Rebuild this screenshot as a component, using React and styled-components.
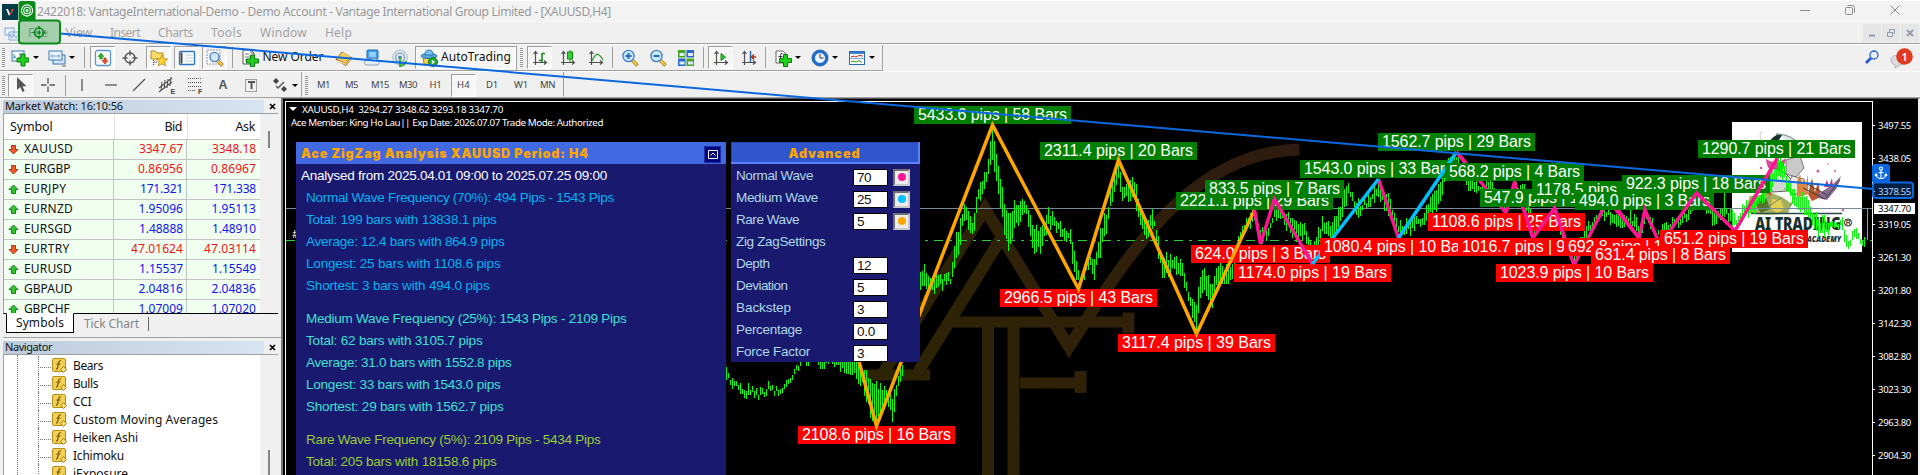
import React, { useLayoutEffect, useRef } from 'react';
import styled, { createGlobalStyle, css } from 'styled-components';

const UI = '"Noto Sans", "Open Sans", sans-serif';
const ARIAL = '"Liberation Sans", Arial, sans-serif';

const Global = createGlobalStyle`
  * { box-sizing: border-box; }
  body { margin: 0; overflow: hidden; background: #f0f0f0; }
`;

/* ---------- text fitted to a given width ---------- */
const FitSpan = styled.span`
  display: inline-block;
  flex: none;
  white-space: pre;
  font-family: ${(p) => p.$font || UI};
  font-size: ${(p) => p.$size || 12}px;
  font-weight: ${(p) => p.$weight || 400};
  color: ${(p) => p.$color || 'inherit'};
  line-height: 1.2;
`;
function Fit({ w, children, ...rest }) {
  const ref = useRef(null);
  useLayoutEffect(() => {
    const el = ref.current;
    el.style.letterSpacing = '0px';
    const natural = el.getBoundingClientRect().width;
    el.style.letterSpacing = `${(w - natural) / el.textContent.length}px`;
  }, [w, children]);
  return <FitSpan ref={ref} {...rest}>{children}</FitSpan>;
}

/* ---------- window frame ---------- */
const Window = styled.div`
  position: relative;
  width: 1920px;
  height: 475px;
  overflow: hidden;
  display: flex;
  flex-direction: column;
  background: #f0f0f0;
  border-top: 1px solid #fff;
`;
const TitleBar = styled.header`
  height: 22px;
  flex: none;
  display: flex;
  align-items: center;
  padding-left: 2px;
  background: #f3f3f3;
  color: #989898;
`;
const AppIcon = styled.svg`margin-right: 19px; flex: none;`;
const WindowButtons = styled.div`
  margin-left: auto;
  display: flex;
  gap: 33px;
  padding: 0 19px 4px 0;
`;
const MenuBar = styled.nav`
  height: 21px;
  flex: none;
  display: flex;
  align-items: center;
  padding-left: 4px;
  border-bottom: 1px solid #a0a0a0;
  color: #a2a2a2;
`;
const MenuItem = styled.div`
  margin-left: ${(p) => p.$ml}px;
  padding-bottom: 2px;
`;
const ChildButtons = styled.div`
  margin-left: auto;
  display: flex;
  gap: 1px;
  padding-right: 1px;
`;
const ChildButton = styled.div`
  width: 18px;
  height: 18px;
  background: #e6e6e6;
  display: grid;
  place-items: center;
`;
const ToolRow = styled.div`
  height: ${(p) => p.$h}px;
  flex: none;
  display: flex;
  justify-content: space-between;
  border-top: 1px solid #fff;
`;
const Bars = styled.div`display: flex;`;
const Toolbar = styled.div`
  display: flex;
  align-items: center;
  height: 100%;
  border-right: 1px solid #a0a0a0;
  border-bottom: 1px solid ${(p) => (p.$last ? 'transparent' : '#a0a0a0')};
  padding: ${(p) => (p.$last ? 2 : 0)}px ${(p) => p.$pr || 0}px 0 ${(p) => p.$pl || 2}px;
`;
const Grip = styled.div`
  width: 3px;
  height: 19px;
  background: repeating-linear-gradient(#9a9a9a 0 1px, #f0f0f0 1px 2px);
`;
const Slot = styled.div`
  margin-left: ${(p) => p.$ml || 0}px;
  width: ${(p) => p.$w || 24}px;
  height: 23px;
  flex: none;
  display: flex;
  align-items: center;
  justify-content: center;
  gap: 3px;
  color: #111;
  ${(p) => p.$on && css`
    background: repeating-conic-gradient(#fff 0 25%, #f0f0f0 0 50%) 0 0 / 2px 2px;
    border: 1px solid;
    border-color: #a0a0a0 #fff #fff #a0a0a0;
  `}
`;
const Sep = styled.div`
  margin-left: ${(p) => p.$ml || 0}px;
  width: 1px;
  height: 21px;
  background: #a0a0a0;
`;
const Caret = styled.div`
  margin-left: ${(p) => p.$ml || 0}px;
  border: 3px solid transparent;
  border-top-color: #000;
  border-bottom: 0;
`;
const RightTools = styled.div`
  display: flex;
  gap: 9px;
  padding: 3px 6px 0 0;
`;

/* ---------- body ---------- */
const Body = styled.div`
  flex: 1;
  min-height: 0;
  display: flex;
  border-top: 1px solid #a0a0a0;
`;
const Dock = styled.aside`
  width: 281px;
  flex: none;
  display: flex;
  flex-direction: column;
  padding-left: 3px;
`;
const DockTitle = styled.div`
  height: 14px;
  flex: none;
  margin-top: ${(p) => p.$mt || 1}px;
  display: flex;
  align-items: center;
  color: #111;
`;
const DockName = styled.div`
  width: 261px;
  height: 13px;
  display: flex;
  align-items: center;
  padding-left: 2px;
  background: linear-gradient(90deg, #bccbdc, #d7e4f2);
`;
const Close = styled.svg`margin-left: 5px;`;
const MarketBox = styled.div`
  height: 201px;
  flex: none;
  width: 275px;
  display: flex;
  border: 1px solid #a0a0a0;
  border-right: 0;
  border-bottom: 1px solid #000;
  overflow: hidden;
`;
const Quotes = styled.div`width: 256px; background: #fff;`;
const QuoteHead = styled.div`
  display: grid;
  grid-template-columns: 110px 73px 73px;
  height: 26px;
  border-bottom: 1px solid #c3c3c3;
  align-items: center;
  color: #111;
  & > * + * { border-left: 1px solid #e3e3e3; height: 100%; }
`;
const HeadCell = styled.div`
  display: flex;
  align-items: center;
  justify-content: ${(p) => (p.$right ? 'flex-end' : 'flex-start')};
  padding: 0 5px 0 6px;
`;
const QuoteRow = styled.div`
  display: grid;
  grid-template-columns: 109px 73px 74px;
  height: 20px;
  background: #f0fff0;
  border-bottom: 1px solid #c3c3c3;
`;
const SymbolCell = styled.div`
  display: flex;
  align-items: center;
  gap: 5px;
  padding-left: 4px;
  color: #111;
`;
const PriceCell = styled.div`
  display: flex;
  align-items: center;
  justify-content: flex-end;
  padding-right: ${(p) => p.$pr}px;
  border-left: 1px solid #c3c3c3;
  color: ${(p) => (p.$up ? '#1414f0' : '#f01414')};
`;
const Scroll = styled.div`
  width: 18px;
  flex: none;
  background: #f0f0f0;
  display: flex;
  justify-content: center;
  padding: ${(p) => p.$top}px 1px 0 0;
`;
const Thumb = styled.div`
  width: 2px;
  height: ${(p) => p.$h}px;
  background: #858585;
`;
const Tabs = styled.div`
  height: 24px;
  flex: none;
  width: 278px;
  display: flex;
  align-items: flex-start;
  padding-left: 3px;
  border-bottom: 1px solid #a0a0a0;
`;
const Tab = styled.div`
  width: 68px;
  height: 20px;
  margin-top: -1px;
  display: flex;
  justify-content: center;
  align-items: center;
  background: #fff;
  border: 1px solid #000;
  border-top: 1px solid #fff;
  color: #111;
`;
const IdleTab = styled.div`
  margin: 3px 0 0 10px;
  height: 14px;
  display: flex;
  align-items: center;
  color: #858585;
  padding-right: 9px;
  border-right: 1px solid #666;
`;
const NavBox = styled.div`
  flex: 1;
  min-height: 0;
  width: 275px;
  display: flex;
  border: 1px solid #a0a0a0;
  border-width: 1px 0 0 1px;
  background: #fff;
  overflow: hidden;
`;
const Tree = styled.div`
  flex: 1;
  margin-left: 13px;
  padding-top: 1px;
  border-left: 1px dotted #777;
  overflow: hidden;
`;
const TreeItem = styled.div`
  margin-left: 20px;
  height: 18px;
  display: flex;
  align-items: center;
  border-left: 1px dotted #777;
  color: #111;
`;
const Twig = styled.div`
  width: 11px;
  border-top: 1px dotted #777;
  margin: 4px 1px 0 1px;
`;
const TreeLabel = styled.div`margin-left: 6px;`;

/* ---------- chart ---------- */
const ChartFrame = styled.main`
  flex: 1;
  min-width: 0;
  display: flex;
  background: #000;
  border-left: 2px solid #777;
  border-right: 2px solid #f0f0f0;
  border-top: 1px solid #555;
  padding: 2px 0 0 2px;
`;
const Plot = styled.section`
  position: relative;
  width: 1588px;
  flex: none;
  border: 1px solid #fff;
  border-bottom: 0;
  overflow: hidden;
`;
/* the drawing and the tags share window coordinates */
const Canvas = styled.svg`
  position: absolute;
  left: -286px;
  top: -102px;
`;
const Tag = styled.div`
  position: absolute;
  left: ${(p) => p.$x - 286}px;
  top: ${(p) => p.$y - 102}px;
  width: ${(p) => p.$w}px;
  height: 18px;
  padding-left: 4px;
  display: flex;
  align-items: center;
  background: ${(p) => (p.$red ? '#ff0000' : '#008000')};
  color: #fff;
`;
const Axis = styled.div`
  flex: 1;
  padding-top: 8px;
  color: #fff;
`;
const Tick = styled.div`
  height: 33px;
  display: flex;
  align-items: center;
  gap: 3px;
  &::before { content: ''; width: 2px; height: 1px; background: #fff; }
`;
const InfoLine = styled.div`
  position: absolute;
  left: ${(p) => p.$x - 286}px;
  top: ${(p) => p.$y - 102}px;
  display: flex;
  align-items: center;
  gap: 5px;
  color: #fff;
`;
const Down = styled.i`
  border: 4px solid transparent;
  border-top-color: #fff;
  border-bottom: 0;
`;
const Panel = styled.div`
  position: absolute;
  left: ${(p) => p.$x - 286}px;
  top: 40px;
  width: ${(p) => p.$w}px;
  height: ${(p) => p.$h}px;
  background: #191970;
`;
const PanelTitle = styled.div`
  height: 22px;
  display: flex;
  align-items: center;
  padding: 0 5px;
  justify-content: ${(p) => (p.$center ? 'center' : 'space-between')};
  background: ${(p) => (p.$center ? '#2f56cd' : '#4169e1')};
  ${(p) => p.$center && css`
    padding-top: 3px;
    border: solid #5a82ff; border-width: 0 2px 2px 0;
    box-shadow: inset 1px 1px #2444b8;
  `}
`;
const Fold = styled.div`
  width: 17px;
  height: 17px;
  margin-top: 3px;
  background: #000080;
  border: 1px solid #1b2fa0;
  display: grid;
  place-items: center;
`;
const Report = styled.div`
  display: flex;
  flex-direction: column;
  gap: 11px;
  padding-left: 10px;
`;
const Group = styled.div`color: ${(p) => p.$color};`;
const Line = styled.div`
  height: 22px;
  display: flex;
  align-items: center;
  padding-top: 2px;
  margin-left: ${(p) => p.$ml || 0}px;
`;
const Setting = styled.div`
  height: 22px;
  display: flex;
  align-items: center;
  padding-left: 5px;
  color: #add8e6;
`;
const SettingName = styled.div`
  width: 117px;
  display: flex;
  padding-top: 2px;
`;
const Field = styled.div`
  width: 35px;
  height: 17px;
  margin-top: 5px;
  padding: 1px 0 0 3px;
  display: flex;
  align-items: center;
  background: #fff;
  border: 1px solid #000;
  color: #111;
`;
const Swatch = styled.div`
  width: 17px;
  height: 17px;
  margin: 4px 0 0 5px;
  display: grid;
  place-items: center;
  background: #ececec;
  border: 2px solid;
  border-color: #6f6f6f #c8c8c8 #c8c8c8 #6f6f6f;
  &::after { content: ''; width: 8px; height: 8px; border-radius: 50%; background: ${(p) => p.$color}; }
`;
const PriceNow = styled.div`
  position: absolute;
  left: 1874px;
  top: 202px;
  width: 41px;
  height: 11px;
  padding-left: 4px;
  display: flex;
  align-items: center;
  background: #fff;
  color: #000;
`;

/* ---------- overlay marks ---------- */
const Overlay = styled.svg`
  position: absolute;
  left: 0;
  top: -1px;
  pointer-events: none;
`;

/* ---------- icons ---------- */
const Svg = ({ w = 18, h = 18, children }) => (
  <svg width={w} height={h} viewBox={`0 0 ${w} ${h}`} fill="none">{children}</svg>
);
const Plus = ({ x, y }) => (
  <path transform={`translate(${x} ${y})`} d="M4 0h4v4h4v4H8v4H4V8H0V4h4z" fill="#1fd01f" stroke="#0a7a0a" />
);
const Axes = () => (
  <g stroke="#505050" strokeWidth="1.2">
    <path d="M4.5 3v13M2 13.5h13M2.5 5l2-2.5 2 2.5M13 11.5l2.5 2-2.5 2" />
  </g>
);
const NewChart = () => (
  <Svg><rect x="1" y="2" width="12" height="10" fill="#fff" stroke="#3b79b5" /><path d="M3 5v5M3 8h2M9 4v5" stroke="#3b79b5" /><Plus x={6} y={5} /></Svg>
);
const Profiles = () => (
  <Svg><rect x="5" y="6" width="12" height="9" fill="#cfe4f7" stroke="#3b79b5" /><rect x="1" y="2" width="13" height="9" fill="#eaf4fd" stroke="#3b79b5" /><path d="M3 7h9M4 5v4M11 5v4" stroke="#7da7cd" /><path d="M14 17h4" stroke="#666" /></Svg>
);
const Watch = () => (
  <Svg><rect x="1.5" y="1.5" width="15" height="15" rx="2" fill="#fff" stroke="#5a96cc" strokeWidth="1.3" /><path d="M4 7.500L7 4l3 3.500H8.200V10H5.800V7.500z" fill="#2bb52b" stroke="#178017" strokeWidth=".6" /><path d="M8 11.500l3 3.500 3-3.500h-1.800V9H9.800v2.500z" fill="#f05020" stroke="#a83010" strokeWidth=".6" /></Svg>
);
const Cross = () => (
  <Svg><g stroke="#555" strokeWidth="1.4"><circle cx="9" cy="9" r="5" /><path d="M9 1.500v5M9 11.500v5M1.500 9h5M11.500 9h5" /></g></Svg>
);
const Star = () => (
  <Svg><path d="M1 2h4l2 2h6v6H1z" fill="#f6dc6a" stroke="#b08d1c" /><path d="M3.500 11v6M4 13h4" stroke="#444" strokeDasharray="1 1" /><path d="M12 6l1.700 3.600 4 .5-3 2.700.8 4L12 14.800 8.500 16.800l.8-4-3-2.700 4-.5z" fill="#ffd23a" stroke="#b9860b" strokeWidth=".8" /></Svg>
);
const Terminal = () => (
  <Svg><rect x="1.500" y="2.500" width="15" height="13" rx="1" fill="#fff" stroke="#2f78bd" strokeWidth="1.4" /><rect x="2.500" y="3.500" width="2" height="11" fill="#444" /><path d="M7 6h8M7 9h8M7 12h8" stroke="#bcd" /></Svg>
);
const Lens = ({ sign, doc }) => (
  <Svg>
    {doc && <path d="M1 1h13v14H1z" fill="#fff" stroke="#88a" strokeDasharray="2 1" />}
    <path d="M11.500 11.500l5 5" stroke="#a97b10" strokeWidth="3.500" /><path d="M11.500 11.500l4.500 4.500" stroke="#f2cf4a" strokeWidth="2" />
    <circle cx={doc ? 8.5 : 7.5} cy={doc ? 8 : 7} r={doc ? 4.6 : 5.6} fill={doc ? '#cde4f4' : '#c6eafb'} stroke="#4a80c0" strokeWidth="1.400" />
    {sign && <path d={sign === '+' ? 'M4.500 7h6M7.500 4v6' : 'M4.500 7h6'} stroke="#2a68b8" strokeWidth="2" />}
  </Svg>
);
const Lens2 = () => <Lens doc />;
const ZoomIn = () => <Lens sign="+" />;
const ZoomOut = () => <Lens sign="-" />;
const Order = () => (
  <Svg><path d="M2 1h8l3 3v11H2z" fill="#fff" stroke="#555" /><path d="M10 1v3h3M4 5h4M4 8h6M4 11h4" stroke="#777" /><Plus x={5.500} y={6} /></Svg>
);
const Book = () => (
  <Svg><path d="M1 10.500L7 3l10 6-6 7.500z" fill="#c98a18" stroke="#7d5208" /><path d="M1.500 9.500l6-6.500 8.500 5-5.500 6z" fill="#f3c95c" /><path d="M2 11.500l9 4 5.500-6" stroke="#fff4d0" /></Svg>
);
const Server = () => (
  <Svg><rect x="4" y="1" width="11" height="9" rx="1" fill="#3f9be8" stroke="#1f6fb8" /><path d="M6 3h7v5H6z" fill="#8fd0ff" /><path d="M2 12q2-3 6-2 4-2 7 1 3 4-1 5H3q-3-1-1-4z" fill="#e6eef7" stroke="#8aa3c0" /></Svg>
);
const Signal = () => (
  <Svg><circle cx="9" cy="8.500" r="7.200" stroke="#b8c8d6" strokeWidth="1.500" /><circle cx="9" cy="8.500" r="4.500" stroke="#7fa8c8" strokeWidth="1.500" /><circle cx="9" cy="8.500" r="2" fill="#4a88b8" /><path d="M9 9v8q5-.5 6-5" stroke="#37b037" strokeWidth="2" /></Svg>
);
const Robot = () => (
  <Svg><path d="M3 8q6 3 12 0l-1 7q-5 3-10 0z" fill="#f2cf4a" stroke="#ad8414" /><ellipse cx="9" cy="7" rx="8" ry="2.500" fill="#5aa9e0" stroke="#2a74b0" /><path d="M5 6q0-5 4-5t4 5z" fill="#7cc2f0" stroke="#2a74b0" /><circle cx="13" cy="13" r="4.500" fill="#1faa30" stroke="#0c7a1c" /><path d="M11.800 10.800v4.400l3.600-2.200z" fill="#fff" /></Svg>
);
const BarsI = () => <Svg><Axes /><path d="M11 4v9M11 4.500h3M8 11.500h3" stroke="#108a10" strokeWidth="1.500" /></Svg>;
const Candle = () => <Svg><Axes /><path d="M11 1v13" stroke="#108a10" /><rect x="8.500" y="3" width="5" height="7" fill="#35d035" stroke="#108a10" /></Svg>;
const Curve = () => <Svg><Axes /><path d="M5 12q4-9 7-6 2 1 4 5" stroke="#3a9a3a" strokeWidth="1.300" /></Svg>;
const Tiles = () => (
  <Svg><rect x="1" y="1" width="7.500" height="7.500" fill="#45a51c" /><rect x="9.500" y="1" width="7.500" height="7.500" fill="#2a66d0" /><rect x="1" y="9.500" width="7.500" height="7.500" fill="#2a66d0" /><rect x="9.500" y="9.500" width="7.500" height="7.500" fill="#45a51c" /><path d="M2.500 4h5v3h-5zM11 4h5v3h-5zM2.500 12.500h5v3h-5zM11 12.500h5v3h-5z" fill="#dcecf8" /></Svg>
);
const Auto = () => <Svg><Axes /><path d="M9 4.500v7l4.500-3.500z" fill="#30c030" stroke="#108a10" /></Svg>;
const Shift = () => <Svg><Axes /><path d="M10.500 2v11" stroke="#2066a8" strokeWidth="1.500" /><path d="M16 8h-4M14 5.500L11.500 8l2.500 2.500" stroke="#b03010" strokeWidth="1.500" /></Svg>;
const Indi = () => <Svg><path d="M2 2h7l3 3v9H2z" fill="#fff" stroke="#666" /><path d="M8.500 4.500q-2-1-2 2V11M4.500 7.500h4" stroke="#333" /><Plus x={5.500} y={5.500} /></Svg>;
const Clock = () => <Svg><circle cx="9" cy="9" r="6.600" fill="#eef6fd" stroke="#1e6fd0" strokeWidth="3" /><circle cx="9" cy="9" r="8.100" stroke="#0f4e9a" strokeWidth=".6" /><path d="M9 5v4h3.500" stroke="#333" /></Svg>;
const Template = () => <Svg><rect x="1.500" y="2.500" width="15" height="13" fill="#fff" stroke="#2a68b0" /><path d="M2 3h14v2H2z" fill="#3b82d0" /><path d="M3 8l3-1 2 1 3-1.500 4 .5" stroke="#b03018" /><path d="M2 9.500h14" stroke="#2a68b0" strokeWidth=".6" /><path d="M3 13l3-1 2 1 3-1.500 3 2" stroke="#2a9a2a" /></Svg>;
const Cursor = () => <Svg><path d="M5 1v13l3.300-3 2.200 5 2.200-1-2.200-4.800h4z" fill="#555" /></Svg>;
const G = (d) => () => <Svg><path d={d} stroke="#555" strokeWidth="1.300" /></Svg>;
const Thin = G('M9 2v5.500M9 10.500V16M2 9h5.500M10.500 9H16');
const VLine = G('M9 3v12');
const HLine = G('M3 9h12');
const Trend = G('M3 15L15 3');
const Small = styled.text`
  font: 700 7px ${ARIAL};
  fill: #444;
`;
const Equi = () => <Svg><path d="M1 12L14 2M1 16L14 6M4 6l-1 9M7 4l-1 9M10 3l-1 9M13 1l-1 9" stroke="#555" strokeWidth="1.100" /><Small x="12.500" y="17.500">E</Small></Svg>;
const Fibo = () => <Svg><path d="M2 2.500h13M2 6.500h13M2 10.500h13M2 14.500h8" stroke="#555" strokeDasharray="1 1" /><Small x="12" y="17.500">F</Small></Svg>;
const TBox = () => <Svg><rect x="3.500" y="3.500" width="11" height="12" stroke="#555" strokeDasharray="1 1" /><path d="M6 6h7M9.500 6v7" stroke="#555" strokeWidth="2" /></Svg>;
const Shapes = () => <Svg><path d="M5 2l3 3-3 3-3-3z" fill="#444" /><path d="M5 10l2 2 6-6" fill="none" stroke="#555" strokeWidth="1.400" /><path d="M13 10l3 3-3 3-3-3z" fill="#444" /></Svg>;

const Arrow = ({ up }) => (
  <svg width="11" height="11" viewBox="0 0 11 11">
    <path
      transform={up ? '' : 'rotate(180 5.500 5.500)'}
      d="M5.500 1l4.500 4.500H7.500V9.500h-4V5.500H1z"
      fill={up ? '#33c433' : '#f25a2a'} stroke={up ? '#187018' : '#9a2c0c'} strokeWidth=".9"
    />
  </svg>
);
const FxIcon = () => (
  <svg width="15" height="15" viewBox="0 0 15 15">
    <rect x=".5" y=".5" width="13" height="13" rx="1.500" fill="#f3cf52" stroke="#b98d1a" />
    <path d="M9 3q-2-.8-2.500 2L5.500 10q-.3 1.200-1.500 1M4.500 6h4" fill="none" stroke="#6d5208" strokeWidth="1.200" />
    <path d="M11.500 8.500l3 3-3 3-3-3z" fill="#f8dc6c" stroke="#a67c12" />
  </svg>
);

/* ---------- data ---------- */
const QUOTES = [
  ['XAUUSD', '3347.67', '3348.18', 0, 49, 44], ['EURGBP', '0.86956', '0.86967', 0, 46.500, 45],
  ['EURJPY', '171.321', '171.338', 1, 42.500, 43], ['EURNZD', '1.95096', '1.95113', 1, 49, 44.500],
  ['EURSGD', '1.48888', '1.48910', 1, 48, 44], ['EURTRY', '47.01624', '47.03114', 0, 45.500, 52],
  ['EURUSD', '1.15537', '1.15549', 1, 48, 44], ['GBPAUD', '2.04816', '2.04836', 1, 48.500, 44.500],
  ['GBPCHF', '1.07009', '1.07020', 1, 45.500, 44.500],
];
const NAV = [['Bears', 30], ['Bulls', 25], ['CCI', 18.500], ['Custom Moving Averages', 145], ['Heiken Ashi', 65], ['Ichimoku', 51], ['iExposure', 55]];
const REPORT = [
  ['#00b4f0', [['Normal Wave Frequency (70%): 494 Pips - 1543 Pips', 308], ['Total: 199 bars with 13838.1 pips', 190.500], ['Average: 12.4 bars with 864.9 pips', 198.500], ['Longest: 25 bars with 1108.6 pips', 194.500], ['Shortest: 3 bars with 494.0 pips', 183.500]]],
  ['#40e0d0', [['Medium Wave Frequency (25%): 1543 Pips - 2109 Pips', 320.500], ['Total: 62 bars with 3105.7 pips', 176.500], ['Average: 31.0 bars with 1552.8 pips', 205.500], ['Longest: 33 bars with 1543.0 pips', 194.500], ['Shortest: 29 bars with 1562.7 pips', 197.500]]],
  ['#9acd32', [['Rare Wave Frequency (5%): 2109 Pips - 5434 Pips', 294.500], ['Total: 205 bars with 18158.6 pips', 190.500]]],
];
const SETTINGS = [
  ['Normal Wave', 77, '70', '#ff1493'], ['Medium Wave', 82, '25', '#00bfff'], ['Rare Wave', 63, '5', '#ffa500'],
  ['Zig ZagSettings', 89.500], ['Depth', 33.500, '12'], ['Deviation', 51.500, '5'], ['Backstep', 55, '3'],
  ['Percentage', 66, '0.0'], ['Force Factor', 74, '3'],
];
const LOW_TAGS = [
  [914, 106, '5433.6 pips | 58 Bars'], [1040, 142, '2311.4 pips | 20 Bars'], [1000, 289, '2966.5 pips | 43 Bars', 1],
  [798, 426, '2108.6 pips | 16 Bars', 1], [1118, 334, '3117.4 pips | 39 Bars', 1], [1176, 192, '2221.1 pips | 29 Bars'],
  [1205, 180, '833.5 pips | 7 Bars'], [1191, 245, '624.0 pips | 3 Bars', 1], [1234, 264, '1174.0 pips | 19 Bars', 1],
  [1300, 160, '1543.0 pips | 33 Bars'], [1378, 133, '1562.7 pips | 29 Bars'], [1428, 213, '1108.6 pips | 25 Bars', 1],
  [1480, 189, '547.9 pips | 12 Bars'], [1532, 181, '1178.5 pips | 17 Bars'], [1622, 175, '922.3 pips | 18 Bars'],
  [1575, 192, '494.0 pips | 3 Bars'], [1496, 264, '1023.9 pips | 10 Bars', 1],
];
const TOP_TAGS = [
  [1320, 238, '1080.4 pips | 10 Bars', 1], [1445, 163, '568.2 pips | 4 Bars'], [1458, 238, '1016.7 pips | 9 Bars', 1],
  [1564, 238, '692.8 pips | 12 Bars', 1], [1591, 246, '631.4 pips | 8 Bars', 1], [1660, 230, '651.2 pips | 19 Bars', 1],
  [1698, 140, '1290.7 pips | 21 Bars'],
];
const PRICES = ['3497.55', '3438.05', '3378.55', '3319.05', '3261.30', '3201.80', '3142.30', '3082.80', '3023.30', '2963.80', '2904.30'];

/* price range along the chart: x, high, low */
const RANGE = [
  726, 370, 378, 732, 378, 388, 735, 376, 382, 743, 386, 401, 752, 383, 393, 758, 390, 401, 768, 383, 393, 782, 387, 394, 790, 372, 384, 798, 360, 366, 805, 350, 364,
  850, 345, 372, 863, 372, 390, 869, 372, 415, 876, 382, 423, 886, 386, 405, 892, 392, 419, 902, 360, 374, 912, 300, 330, 920, 272, 295, 923, 265, 285, 937, 278, 294, 950, 272, 281,
  955, 238, 268, 964, 205, 222, 973, 218, 242, 978, 188, 205, 987, 162, 178, 992, 127, 162, 998, 162, 192, 1007, 215, 252, 1013, 202, 235, 1025, 195, 212, 1032, 222, 253,
  1042, 228, 252, 1047, 207, 228, 1058, 218, 235, 1070, 232, 245, 1073, 248, 275, 1080, 272, 288, 1090, 252, 268, 1094, 255, 278, 1101, 225, 252, 1107, 205, 228, 1113, 175, 198,
  1118, 163, 185, 1122, 185, 200, 1133, 172, 198, 1140, 205, 228, 1145, 228, 245, 1153, 210, 225, 1162, 255, 283, 1172, 255, 272, 1182, 258, 275, 1188, 288, 305, 1196, 300, 331,
  1203, 262, 285, 1211, 285, 312, 1217, 262, 285, 1232, 265, 285, 1238, 235, 248, 1247, 218, 230, 1254, 212, 225, 1260, 225, 243, 1267, 225, 240, 1275, 202, 218, 1282, 208, 222,
  1292, 215, 238, 1305, 222, 242, 1313, 245, 262, 1322, 218, 235, 1330, 225, 241, 1342, 195, 218, 1348, 185, 198, 1357, 202, 217, 1367, 195, 210, 1378, 182, 200, 1387, 192, 212,
  1398, 222, 238, 1410, 218, 235, 1422, 212, 225, 1437, 188, 212, 1447, 155, 175, 1456, 153, 165, 1467, 175, 190, 1480, 180, 197, 1490, 182, 192, 1507, 203, 212, 1515, 184, 194,
  1523, 183, 200, 1533, 223, 238, 1554, 210, 222, 1567, 240, 257, 1575, 250, 263, 1587, 225, 240, 1597, 208, 222, 1613, 208, 222, 1617, 212, 230, 1630, 212, 228, 1640, 225, 238,
  1645, 210, 222, 1657, 228, 240, 1670, 218, 230, 1682, 213, 228, 1690, 202, 215, 1697, 195, 205, 1707, 203, 215, 1713, 210, 225, 1724, 203, 217, 1735, 215, 230, 1747, 202, 216,
  1757, 195, 210, 1767, 178, 195, 1778, 160, 178, 1783, 162, 182, 1793, 188, 205, 1807, 198, 215, 1813, 212, 235, 1820, 218, 238, 1833, 216, 228, 1842, 218, 232, 1847, 238, 253,
  1853, 228, 240, 1865, 238, 246,
];
function barsPath() {
  let d = '';
  let seed = 7;
  const rnd = () => { seed = (seed * 16807) % 2147483647; return seed / 2147483647; };
  for (let i = 0; i + 5 < RANGE.length; i += 3) {
    const [x0, h0, l0, x1, h1, l1] = RANGE.slice(i, i + 6);
    for (let x = x0 + (x0 % 2); x < x1; x += 2) {
      const t = (x - x0) / (x1 - x0);
      const hi = Math.round(h0 + (h1 - h0) * t + rnd() * 10 - 3);
      const lo = Math.round(l0 + (l1 - l0) * t + rnd() * 10 - 7);
      d += `M${x + 0.5} ${hi}V${Math.max(lo, hi + 5)}`;
    }
  }
  return d + 'M1867.500 208V240M1724.500 192V215';
}
const BARS = barsPath();

const Tags = ({ list }) => list.map(([x, y, text, red]) => {
  const w = text.length === 21 ? 157 : text.length === 20 ? 148 : 139;
  return <Tag key={text} $x={x} $y={y} $w={w} $red={red}><Fit w={w - 8} $font={ARIAL} $size={16}>{text}</Fit></Tag>;
});

const Brand = styled.text`
  font: 900 17px "Noto Sans", ${ARIAL};
  fill: #17302f;
`;
const BrandSub = styled.text`
  font: italic 800 8px "Open Sans", ${ARIAL};
  fill: #17302f;
`;

function Logo() {
  return (
    <g>
      <rect x="1732" y="122" width="130" height="130" fill="#fff" />
      <path d="M1762 131q-4 5 0 10" stroke="#ccc" fill="none" />
      <path d="M1769 142q6-9 14-8l-7 10z" fill="#173330" />
      <path d="M1776 134q14 0 23 10" fill="none" stroke="#8c9a99" strokeWidth="1.500" />
      <path d="M1783 136q10 1 15 9l-14 1z" fill="#e2e6e4" />
      <path d="M1766 159q10 7 20-1l-3 12-9 4q-8-6-8-15z" fill="#d34c9b" />
      <path d="M1786 160l14-4 4 12-8 9-10-3z" fill="#c9c9c9" stroke="#777" />
      <path d="M1773 168l12 5 8 8-6 10-14 1-6-8z" fill="#d4d6d3" stroke="#5a625d" />
      <path d="M1792 176l12 3 1 12-11 4-7-8z" fill="#eceae6" stroke="#777" />
      <path d="M1750 196q-6 14 0 17 18 3 38 0l4-9-10-7-8-3-6-4-8 5z" fill="#a3af62" />
      <path d="M1755 204l7-9 5 5 3 9-9 4z" fill="#54742a" />
      <path d="M1772 199l9 1 3 9-7 4-6-4z" fill="#e3d050" />
      <path d="M1762 179l4-4v18l-4 3zM1768 182l4 2-1 12-4-2z" fill="#c1682c" />
      <path d="M1797 181l3-7 2 9 2-4 2 5 2-10v20l-11 4z" fill="#dd8440" />
      <path d="M1808 194l4-16 3 14 3-10 3 15-9 4z" fill="#b8562c" />
      <path d="M1818 194l14-9 9-9-4 12-10 12-9-2z" fill="#8d6a92" />
      <path d="M1803 188l22 11M1807 184l20 11M1826 198l14-18" stroke="#39423f" fill="none" />
      <path d="M1784 188l12 9M1756 205l14-8M1765 209l16-11M1790 207l6-14" stroke="#66706b" fill="none" strokeWidth=".8" />
      <path d="M1824 187l3-7 2 6 3-8 1 9z" fill="#bd3b86" />
      <g fill="#d8569c"><circle cx="1761" cy="168" r="1.300" /><circle cx="1818" cy="171" r="1.500" /><circle cx="1835" cy="171" r="1" /><circle cx="1843" cy="210" r="1.200" /><circle cx="1828" cy="164" r=".8" /></g>
      <path d="M1751 213.500h91" stroke="#2a4a48" strokeWidth="1.300" />
      <Brand x="1755" y="230" textLength="86" lengthAdjust="spacingAndGlyphs">AI TRADING</Brand>
      <circle cx="1848" cy="222.500" r="3.600" fill="none" stroke="#222" /><Small x="1845.800" y="225">R</Small>
      <path d="M1756 240h20" stroke="#17302f" />
      <BrandSub x="1807" y="242" textLength="34" lengthAdjust="spacingAndGlyphs">ACADEMY</BrandSub>
    </g>
  );
}

function Chart() {
  return (
    <ChartFrame>
      <Plot>
        <Canvas width="1920" height="480" viewBox="0 0 1920 480" fill="none">
          <defs>
            <linearGradient id="mark" gradientUnits="userSpaceOnUse" x1="860" y1="380" x2="1300" y2="150">
              <stop offset="0" stopColor="#2c2404" /><stop offset=".5" stopColor="#302109" /><stop offset="1" stopColor="#2e1a10" />
            </linearGradient>
          </defs>
          <g stroke="url(#mark)" strokeWidth="12">
            <path d="M882 375L985 209L1069 347L1101 297C1140 240 1200 152 1299.500 149.500" />
            <path d="M918 372L1000 240" />
            <path d="M858.500 375h71.500M952 322h176M1020 383h55" strokeWidth="11" />
            <path d="M1128.500 312.500v21M988 327v160M1013.500 327v160M1080.500 371v22" />
          </g>
          <path d="M286 208.500h1586" stroke="#778899" />
          <path d="M286 240.500h1586" stroke="#32cd32" strokeDasharray="9 6 3 6" />
          <Logo />
          <path d={BARS} stroke="#00ff00" />
          <path d="M1732 208.500h130" stroke="#778899" />
          <path d="M1456.500 152L1506 213L1514.500 182L1533 238M1554.500 208L1574 265L1608 200L1639 238" strokeWidth="3.500" stroke="#ff1493" />
        </Canvas>
        <Tags list={LOW_TAGS} />
        <Canvas width="1920" height="480" viewBox="0 0 1920 480" fill="none" strokeWidth="3.500">
          <path d="M845 310L876.500 426L992.500 125L1078.500 289L1118.500 160L1196.500 334L1254.500 210" stroke="#ffa500" />
          <path d="M1254.500 210L1260.500 244L1274.500 199L1312.500 264M1378.500 179L1398.500 238M1456.500 152L1466 163M1523.500 208L1533 238L1554.500 208L1567 245M1618 210L1639 238L1645 210L1660 245L1696.500 193L1735 231L1777.500 158" stroke="#ff1493" />
          <path d="M1312.500 264L1378.500 179M1398.500 238L1456.500 152" stroke="#00bfff" />
        </Canvas>
        <Tags list={TOP_TAGS} />
        <InfoLine $x={289} $y={103.5}><Down /><Fit w={201} $size={9.8}>{'XAUUSD,H4  3294.27 3348.62 3293.18 3347.70'}</Fit></InfoLine>
        <InfoLine $x={291} $y={116.5}><Fit w={312} $size={9.8}>Ace Member: King Ho Lau|| Exp Date: 2026.07.07 Trade Mode: Authorized</Fit></InfoLine>
        <InfoLine $x={292} $y={228}><Fit w={6} $size={10}>#</Fit></InfoLine>
        <Panel $x={296} $w={430} $h={340}>
          <PanelTitle>
            <Fit w={288} $font={'Inter, "Open Sans", sans-serif'} $weight={900} $size={12.5} $color="#ffa500">Ace ZigZag Analysis XAUUSD Period: H4</Fit>
            <Fold><svg width="10" height="9" viewBox="0 0 10 9" fill="none" stroke="#fff"><path d="M.5.5h9v8h-9zM2.500 5.500L5 3l2.500 2.500" /></svg></Fold>
          </PanelTitle>
          <Line $ml={5}><Fit w={306} $font={ARIAL} $size={13.500} $color="#fff">Analysed from 2025.04.01 09:00 to 2025.07.25 09:00</Fit></Line>
          <Report>
            {REPORT.map(([color, lines]) => (
              <Group key={color} $color={color}>
                {lines.map(([t, w]) => <Line key={t}><Fit w={w} $font={ARIAL} $size={13.500}>{t}</Fit></Line>)}
              </Group>
            ))}
          </Report>
        </Panel>
        <Panel $x={731} $w={189} $h={220}>
          <PanelTitle $center><Fit w={72} $font={'Inter, "Open Sans", sans-serif'} $weight={900} $size={12.5} $color="#ffa500">Advanced</Fit></PanelTitle>
          {SETTINGS.map(([name, w, val, color]) => (
            <Setting key={name}>
              <SettingName><Fit w={w} $font={ARIAL} $size={13.500}>{name}</Fit></SettingName>
              {val && <Field><Fit w={val.length === 3 ? 18 : val.length * 7} $font={ARIAL} $size={13.500}>{val}</Fit></Field>}
              {color && <Swatch $color={color} />}
            </Setting>
          ))}
        </Panel>
      </Plot>
      <Axis>
        {PRICES.map((p) => <Tick key={p}><Fit w={33} $size={9.500}>{p}</Fit></Tick>)}
      </Axis>
    </ChartFrame>
  );
}

const B = ({ i: I, ml, w, on }) => <Slot $ml={ml} $w={w} $on={on}><I /></Slot>;
const FRAMES = [['M1', 324, 13], ['M5', 352, 13], ['M15', 380.500, 18], ['M30', 408.500, 18], ['H1', 436, 12], ['H4', 464, 13], ['D1', 492.500, 12], ['W1', 521.500, 14], ['MN', 548, 15]];

export default function App() {
  return (
    <Window>
      <Global />
      <TitleBar>
        <AppIcon width="16" height="16" viewBox="0 0 16 16"><rect width="16" height="16" fill="#073a47" /><path d="M4 5h2l2 5-1 2z" fill="#fff" /><path d="M8 10l2-5h2l-3.500 6z" fill="#e8502c" /></AppIcon>
        <Fit w={574} $size={12}>2422018: VantageInternational-Demo - Demo Account - Vantage International Group Limited - [XAUUSD,H4]</Fit>
        <WindowButtons>
          <svg width="12" height="12"><path d="M1 6.500h10" stroke="#8c8c8c" /></svg>
          <svg width="12" height="12" fill="none" stroke="#8c8c8c"><rect x="1.500" y="3.500" width="7" height="7" rx="1" /><path d="M3.500 1.500h5q2 0 2 2v5" /></svg>
          <svg width="12" height="12"><path d="M1.500 1.500l9 9M10.500 1.500l-9 9" stroke="#8c8c8c" /></svg>
        </WindowButtons>
      </TitleBar>
      <MenuBar>
        <Svg w={16} h={15}><path d="M1 2h9v7H1zM5 6h10v8H5z" fill="#eaf2fc" stroke="#7ea6dc" /><path d="M6 9l2 3 2-3 2 3 2-3" stroke="#7ea6dc" /></Svg>
        <MenuItem $ml={8}><Fit w={20}>File</Fit></MenuItem>
        <MenuItem $ml={17.500}><Fit w={27}>View</Fit></MenuItem>
        <MenuItem $ml={17.500}><Fit w={30}>Insert</Fit></MenuItem>
        <MenuItem $ml={18}><Fit w={35}>Charts</Fit></MenuItem>
        <MenuItem $ml={18}><Fit w={31}>Tools</Fit></MenuItem>
        <MenuItem $ml={18}><Fit w={47}>Window</Fit></MenuItem>
        <MenuItem $ml={18}><Fit w={27}>Help</Fit></MenuItem>
        <ChildButtons>
          <ChildButton><svg width="10" height="10"><path d="M2 7.500h6" stroke="#8fa0b4" strokeWidth="2" /></svg></ChildButton>
          <ChildButton><svg width="10" height="10" fill="none" stroke="#8fa0b4"><path d="M1.500 4.500h5v4h-5zM3.500 4V1.500h5v4H7M1 4.500h6M3 1.500h6" /></svg></ChildButton>
          <ChildButton><svg width="10" height="10"><path d="M2 2l6 6M8 2L2 8" stroke="#8fa0b4" strokeWidth="2" /></svg></ChildButton>
        </ChildButtons>
      </MenuBar>
      <ToolRow $h={27}>
        <Bars>
          <Toolbar $pr={0}>
            <Grip />
            <B i={NewChart} ml={3} /><Caret $ml={1} />
            <B i={Profiles} ml={6} /><Caret $ml={0} /><Sep $ml={9} />
            <B i={Watch} ml={5} w={25} on /><B i={Cross} ml={3} /><B i={Star} ml={4} w={25} on /><B i={Terminal} ml={3} w={25} on /><B i={Lens2} ml={3} w={25} on />
            <Sep $ml={5} />
            <B i={Order} ml={5} /><Slot $w={60} $ml={1}><Fit w={61}>New Order</Fit></Slot>
            <B i={Book} ml={9} /><B i={Server} ml={4} /><B i={Signal} ml={4} />
            <Slot $ml={3} $w={101} $on><Robot /><Fit w={70}>AutoTrading</Fit></Slot>
          </Toolbar>
          <Toolbar $pl={3} $pr={7}>
            <Grip />
            <B i={BarsI} ml={4} w={25} on /><B i={Candle} ml={4} /><B i={Curve} ml={4} /><Sep $ml={4} />
            <B i={ZoomIn} ml={5} /><B i={ZoomOut} ml={4} /><B i={Tiles} ml={4} /><Sep $ml={5} />
            <B i={Auto} ml={4} w={25} on /><B i={Shift} ml={4} /><Sep $ml={4} />
            <B i={Indi} ml={5} /><Caret $ml={0} />
            <B i={Clock} ml={7} /><Caret $ml={0} />
            <B i={Template} ml={7} /><Caret $ml={0} />
          </Toolbar>
        </Bars>
        <RightTools>
          <svg width="16" height="20" viewBox="0 0 16 20" fill="none"><path d="M2 15l5-5" stroke="#2a5fd0" strokeWidth="3" /><circle cx="10" cy="7" r="4" fill="#e8f2ff" stroke="#2a5fd0" strokeWidth="1.300" /></svg>
          <svg width="25" height="22" viewBox="0 0 25 22"><path d="M2 12q0-5 8-5t8 5q0 4-7 5l-5 3v-3q-4-1-4-5z" fill="#dcdce2" stroke="#b4b4bc" /><circle cx="15.500" cy="8.500" r="8.300" fill="#e23a20" /><text x="12.500" y="12.500" fill="#fff" fontSize="11" fontFamily="Noto Sans" fontWeight="600">1</text></svg>
        </RightTools>
      </ToolRow>
      <ToolRow $h={26}>
        <Bars>
          <Toolbar $last $pr={3}>
            <Grip />
            <B i={Cursor} ml={3} w={25} on /><B i={Thin} ml={3} /><Sep $ml={5} />
            <B i={VLine} ml={4} /><B i={HLine} ml={5} /><B i={Trend} ml={4} /><B i={Equi} ml={4} /><B i={Fibo} ml={4} />
            <Slot $ml={4}><Fit w={9} $font={ARIAL} $weight={700} $size={12.500} $color="#555">A</Fit></Slot>
            <B i={TBox} ml={4} /><B i={Shapes} ml={5} /><Caret $ml={0} />
          </Toolbar>
          <Toolbar $last $pl={3} $pr={3}>
            <Grip />
            {FRAMES.map(([t, c, w], i) => {
              const prev = i ? FRAMES[i - 1][1] + 12.5 : 308.5;
              return <Slot key={t} $w={25} $ml={c - 12.5 - prev} $on={t === 'H4'}><Fit w={w} $size={9.500} $color="#444">{t}</Fit></Slot>;
            })}
          </Toolbar>
        </Bars>
      </ToolRow>
      <Body>
        <Dock>
          <DockTitle><DockName><Fit w={118} $size={11}>Market Watch: 16:10:56</Fit></DockName><Close width="7" height="7"><path d="M1 1l5 5M6 1L1 6" stroke="#000" strokeWidth="1.600" /></Close></DockTitle>
          <MarketBox>
            <Quotes>
              <QuoteHead>
                <HeadCell><Fit w={42.500} $size={12.500}>Symbol</Fit></HeadCell>
                <HeadCell $right><Fit w={17.500} $size={12.500}>Bid</Fit></HeadCell>
                <HeadCell $right><Fit w={19.500} $size={12.500}>Ask</Fit></HeadCell>
              </QuoteHead>
              {QUOTES.map(([s, bid, ask, up, sw, nw]) => (
                <QuoteRow key={s}>
                  <SymbolCell><Arrow up={up} /><Fit w={sw}>{s}</Fit></SymbolCell>
                  <PriceCell $up={up} $pr={3}><Fit w={nw}>{bid}</Fit></PriceCell>
                  <PriceCell $up={up} $pr={4}><Fit w={nw}>{ask}</Fit></PriceCell>
                </QuoteRow>
              ))}
            </Quotes>
            <Scroll $top={17}><Thumb $h={17} /></Scroll>
          </MarketBox>
          <Tabs>
            <Tab><Fit w={48}>Symbols</Fit></Tab>
            <IdleTab><Fit w={55}>Tick Chart</Fit></IdleTab>
          </Tabs>
          <DockTitle $mt={2}><DockName><Fit w={47} $size={11}>Navigator</Fit></DockName><Close width="7" height="7"><path d="M1 1l5 5M6 1L1 6" stroke="#000" strokeWidth="1.600" /></Close></DockTitle>
          <NavBox>
            <Tree>
              {NAV.map(([t, w]) => <TreeItem key={t}><Twig /><FxIcon /><TreeLabel><Fit w={w}>{t}</Fit></TreeLabel></TreeItem>)}
            </Tree>
            <Scroll $top={95}><Thumb $h={30} /></Scroll>
          </NavBox>
        </Dock>
        <Chart />
      </Body>
      <PriceNow><Fit w={33} $size={9.500}>3347.70</Fit></PriceNow>
      <Overlay width="1920" height="475" viewBox="0 0 1920 475" fill="none">
        <path d="M60 33.500L1873 189" stroke="#0a68e0" strokeWidth="2" />
        <path d="M18.500 20V4q0-3 3-3h11q3 0 3 3v16z" fill="#078a17" />
        <g stroke="#fff" strokeWidth="1.100"><circle cx="27" cy="10.500" r="5.600" /><circle cx="27" cy="10.500" r="3.300" /><circle cx="27" cy="10.500" r="1" /></g>
        <rect x="19" y="20.500" width="41" height="23" rx="3" fill="#0a8a1a" fillOpacity=".32" stroke="#078a17" strokeWidth="2" />
        <g stroke="#078a17" strokeWidth="1.500"><circle cx="39" cy="32.500" r="4.500" /><circle cx="39" cy="32.500" r="1" fill="#078a17" /><path d="M39 26v3M39 36v3M32.500 32.500h3M42.500 32.500h3" /></g>
        <rect x="1873" y="182.500" width="40" height="15.500" rx="3" fill="#0a68e0" fillOpacity=".3" stroke="#0a68e0" strokeWidth="2" />
        <path d="M1872 182v-15q0-3 3-3h12q3 0 3 3v15z" fill="#0a68e0" />
        <g stroke="#fff" strokeWidth="1.100"><circle cx="1881" cy="168.500" r="1.500" /><path d="M1881 170v8.500M1878.500 172.500h5M1876 174.500q.5 4 5 4t5-4M1875 176l1-2 1.500 1.500M1887 176l-1-2-1.500 1.500" /></g>
      </Overlay>
    </Window>
  );
}
